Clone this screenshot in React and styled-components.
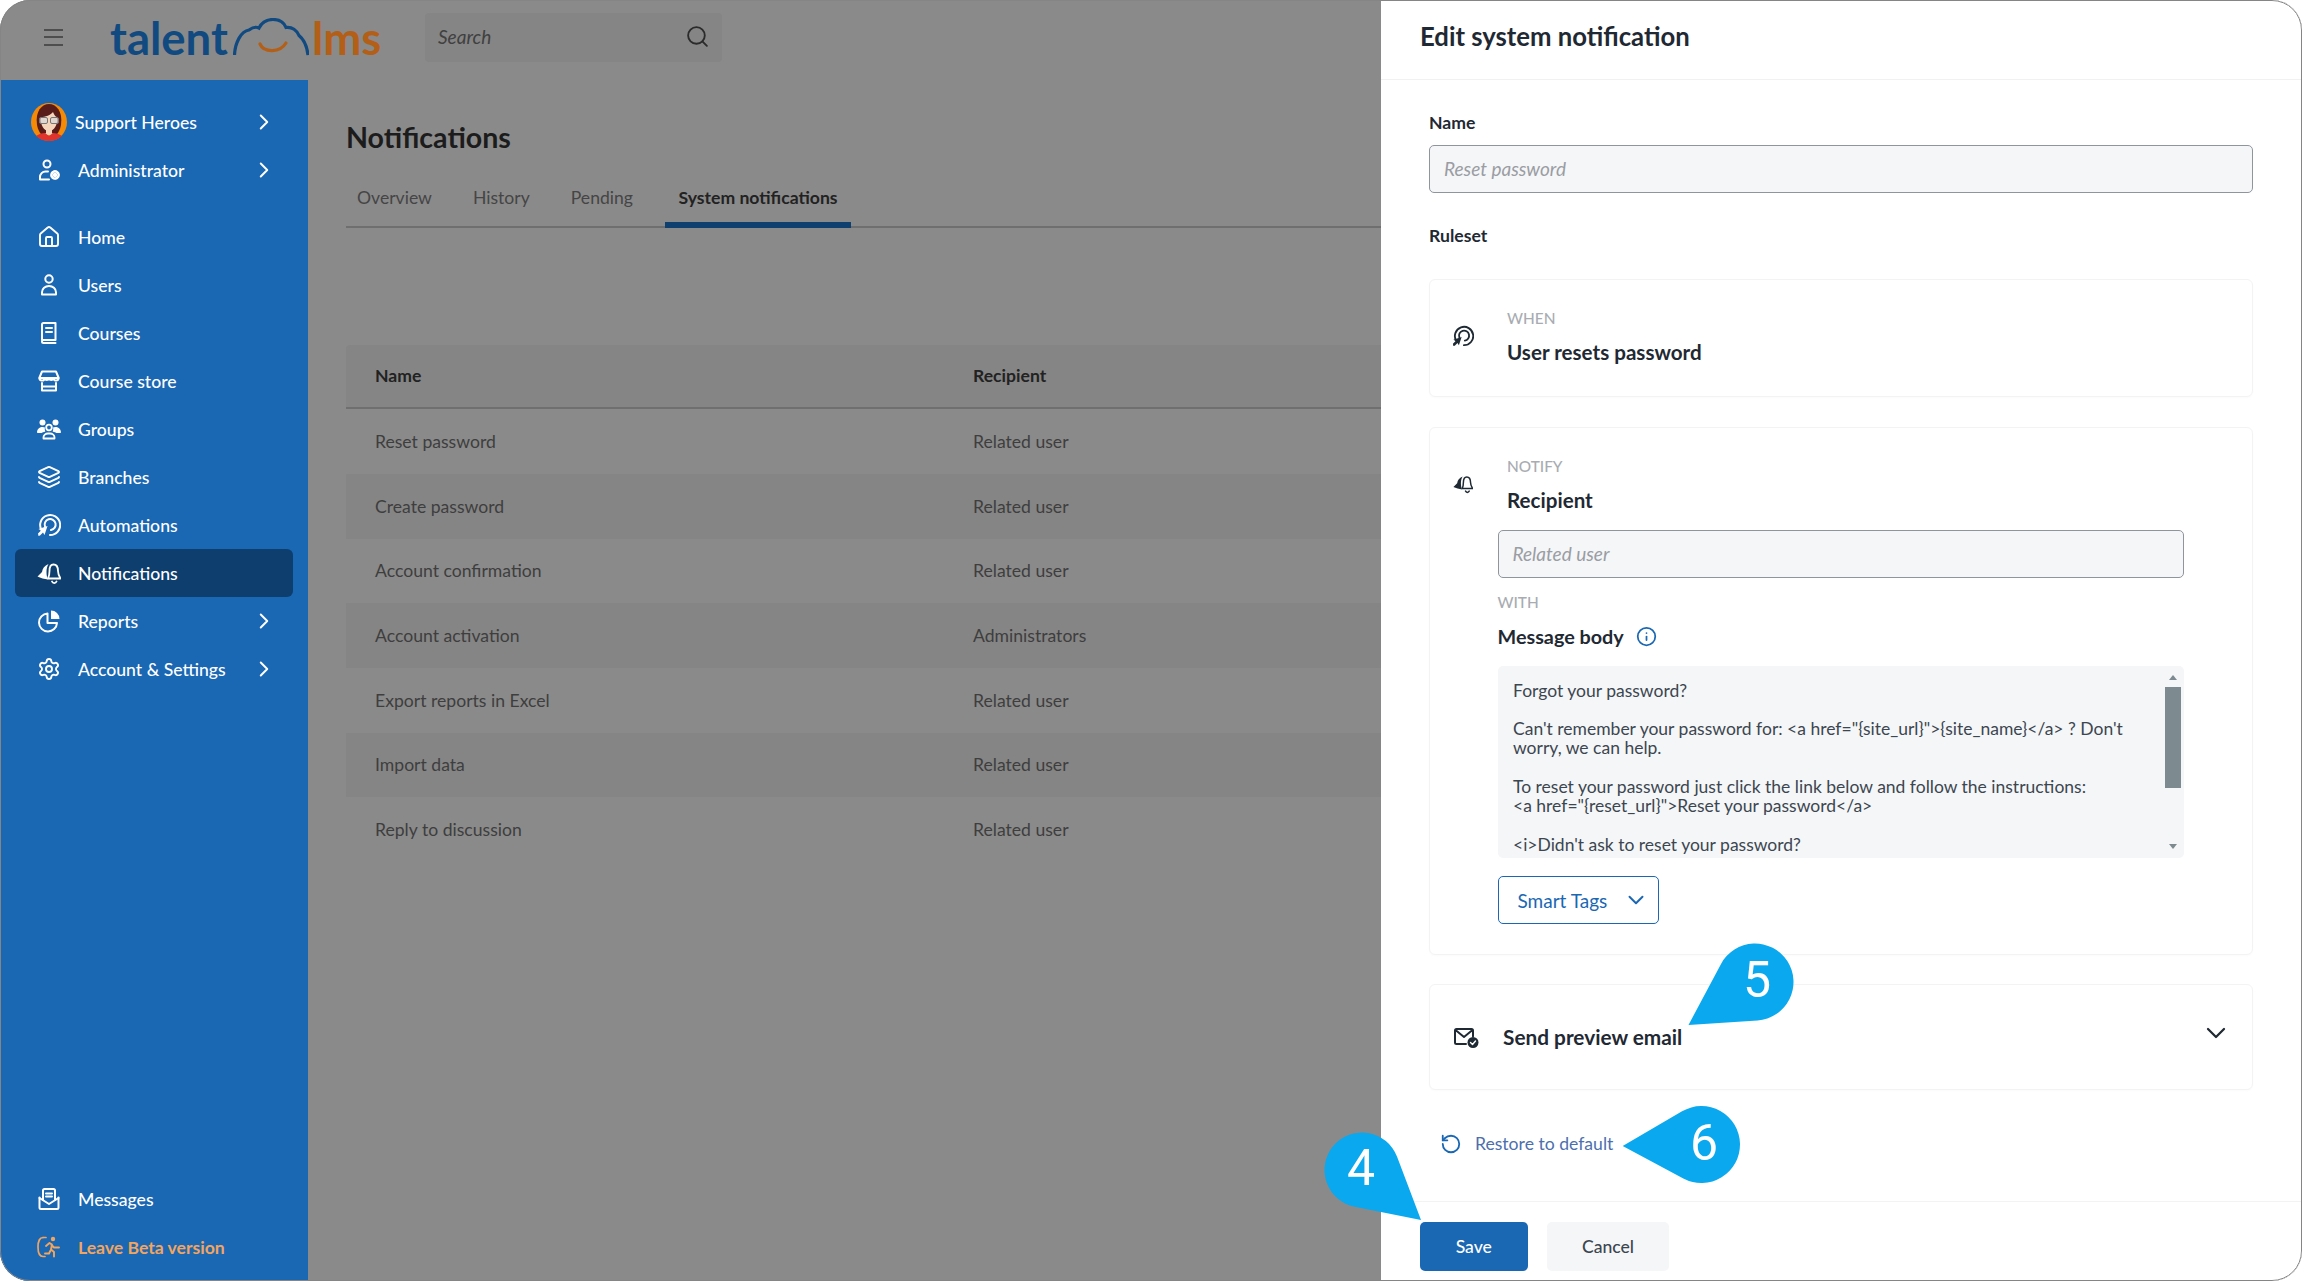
import React from 'react'
import styled, { createGlobalStyle } from 'styled-components'
import { ChevronDown, ChevronRight, Home, Info, Layers, RotateCcw, Search, Settings } from 'lucide-react'

const font = '"Lato", "Noto Sans", sans-serif'

const GlobalStyle = createGlobalStyle`
  html, body {
    margin: 0;
    padding: 0;
    background: #fff;
    font-family: ${font};
  }
  * { box-sizing: border-box; }
`

const Frame = styled.div`
  position: relative;
  width: 2302px;
  height: 1281px;
  display: flex;
  flex-direction: column;
  overflow: hidden;
  border-radius: 30px;
  background: #8a8a8a;
  &::after {
    content: '';
    position: absolute;
    inset: 0;
    border: 1.5px solid #858585;
    border-radius: 30px;
    pointer-events: none;
  }
`

const TopBar = styled.header`
  height: 80px;
  flex: none;
  display: flex;
  align-items: center;
  padding: 0 0 6px 44px;
  background: #8a8a8a;
  box-shadow: 0 1px 3px rgba(0, 0, 0, 0.25);
`

const Burger = styled.div`
  width: 19px;
  height: 17px;
  margin-right: 47px;
  border-top: 2.5px solid #4e4e4e;
  border-bottom: 2.5px solid #4e4e4e;
  display: flex;
  align-items: center;
  &::before {
    content: '';
    flex: 1;
    height: 2.5px;
    background: #4e4e4e;
  }
`

const Logo = styled.div`
  width: 269px;
  display: flex;
  align-items: center;
  margin-right: 46px;
  font-size: 45.5px;
  font-weight: 700;
  line-height: 1;
`

const LogoWord = styled.span`
  color: ${({ $accent }) => ($accent ? '#b35f17' : '#114a80')};
  margin-top: 2px;
`

const CloudMark = styled.svg`
  width: 76px;
  height: 38px;
  margin: 0 3px 0 5px;
  flex: none;
`

const SearchBox = styled.div`
  width: 297px;
  height: 49px;
  display: flex;
  align-items: center;
  justify-content: space-between;
  padding: 0 12px 2px 13px;
  border-radius: 4px;
  background: #858585;
  color: #404040;
  font-size: 19px;
  font-style: italic;
  svg { color: #2b2b2b; }
`

const Body = styled.div`
  flex: 1;
  min-height: 0;
  display: flex;
`

const Sidebar = styled.nav`
  width: 308px;
  flex: none;
  display: flex;
  flex-direction: column;
  padding: 18px 15px 10px;
  background: #1a67b3;
`

const NavGroup = styled.div`
  display: flex;
  flex-direction: column;
  margin-top: ${({ $gap }) => $gap || 0}px;
`

const BottomGroup = styled(NavGroup)`
  margin-top: auto;
`

const NavRow = styled.div`
  height: 48px;
  display: flex;
  align-items: center;
  gap: 17px;
  padding: 0 16px 0 22px;
  border-radius: 6px;
  font-size: 17.6px;
  font-weight: ${({ $warn }) => ($warn ? 700 : 500)};
  color: ${({ $warn }) => ($warn ? '#f2a55e' : '#fff')};
  background: ${({ $active }) => ($active ? '#0e3e6e' : 'transparent')};
`

const ProfileRow = styled(NavRow)`
  gap: 8px;
  padding-left: 16px;
`

const NavIcon = styled.svg`
  width: ${({ $size }) => $size || 24}px;
  height: ${({ $size }) => $size || 24}px;
  flex: none;
`

const Arrow = styled(ChevronRight)`
  margin-left: auto;
  flex: none;
`

const Main = styled.main`
  flex: 1;
  min-width: 0;
  padding: 39px 0 0 38px;
  background: #8a8a8a;
`

const PageTitle = styled.h1`
  margin: 0;
  font-size: 28.6px;
  line-height: 36px;
  font-weight: 700;
  color: #1c1c1c;
`

const TabBar = styled.div`
  display: flex;
  gap: 11px;
  height: 62px;
  margin-top: 11px;
  padding-left: 11px;
  border-bottom: 2px solid #6f6f6f;
`

const Tab = styled.div`
  height: 62px;
  display: flex;
  align-items: center;
  padding: 6px ${({ $active }) => ($active ? 13.5 : 12)}px 0;
  margin: 0 ${({ $active }) => ($active ? 0 : 6)}px 0 ${({ $active }) => ($active ? 3 : 0)}px;
  font-size: 17.6px;
  font-weight: ${({ $active }) => ($active ? 700 : 400)};
  color: ${({ $active }) => ($active ? '#222' : '#454545')};
  border-bottom: 6px solid ${({ $active }) => ($active ? '#0f3f6e' : 'transparent')};
  &:first-child { margin-left: -12px; }
`

const TableRow = styled.div`
  display: grid;
  grid-template-columns: 598px 1fr;
  align-items: center;
  height: 64.7px;
  padding-left: 29px;
  font-size: 17.6px;
  color: #3e3e3e;
  background: ${({ $striped }) => ($striped ? '#858585' : 'transparent')};
`

const TableHead = styled(TableRow)`
  margin-top: 116.5px;
  border-radius: 4px 4px 0 0;
  border-bottom: 2.5px solid #6f6f6f;
  font-weight: 700;
  color: #222;
  background: #858585;
`

const Drawer = styled.aside`
  position: absolute;
  top: 0;
  right: 0;
  bottom: 0;
  width: 921px;
  display: flex;
  flex-direction: column;
  background: #fff;
  color: #1f2933;
`

const DrawerHead = styled.div`
  height: 80px;
  flex: none;
  display: flex;
  align-items: center;
  padding: 0 0 8px 39px;
  border-bottom: 1px solid #f1f1f2;
  font-size: 25.7px;
  font-weight: 700;
`

const DrawerBody = styled.div`
  flex: 1;
  min-height: 0;
  padding: 32px 49px 0 48px;
`

const FieldLabel = styled.div`
  font-size: 17.6px;
  line-height: 22px;
  font-weight: 700;
  margin-top: ${({ $top }) => $top || 0}px;
`

const ReadOnlyInput = styled.div`
  height: 47.5px;
  display: flex;
  align-items: center;
  margin-top: ${({ $top }) => $top || 0}px;
  padding-left: 14px;
  border: 1.5px solid #8f959c;
  border-radius: 5px;
  background: #f5f6f8;
  font-size: 19px;
  font-style: italic;
  color: #9a9da3;
`

const Card = styled.section`
  margin-top: ${({ $top }) => $top}px;
  border: 1px solid #f3f3f4;
  border-radius: 6px;
  box-shadow: 0 1px 2px rgba(0, 0, 0, 0.02);
`

const WhenCard = styled(Card)`
  height: 118px;
  display: flex;
  align-items: center;
  padding: 0 0 4px 22px;
`

const NotifyCard = styled(Card)`
  height: 528px;
  padding: 28.5px 68px 0 23px;
`

const PreviewCard = styled(Card)`
  height: 106px;
  display: flex;
  align-items: center;
  gap: 24px;
  padding: 0 20px 0 23px;
`

const RuleHead = styled.div`
  display: flex;
  align-items: center;
  gap: ${({ $gap }) => $gap || 34}px;
`

const RuleText = styled.div`
  display: flex;
  flex-direction: column;
  gap: 12px;
`

const RuleTag = styled.div`
  font-size: 15.4px;
  line-height: 20px;
  font-weight: 500;
  color: #a8acb2;
`

const RuleTitle = styled.div`
  display: flex;
  align-items: center;
  gap: 12px;
  font-size: 20.6px;
  line-height: 24px;
  font-weight: 700;
  color: #1f2933;
`

const RuleFields = styled.div`
  margin-left: 44.5px;
`

const SpacedTag = styled(RuleTag)`
  margin-top: 14.5px;
`

const SpacedTitle = styled(RuleTitle)`
  margin-top: 12px;
  font-size: 19.8px;
`

const MessageBox = styled.div`
  position: relative;
  height: 192px;
  margin-top: 17.5px;
  padding: 15px 0 0 15.5px;
  overflow: hidden;
  border-radius: 5px;
  background: #f5f6f8;
  font-size: 17.5px;
  line-height: 19.3px;
  white-space: pre;
  color: #3c4650;
`

const ScrollTrack = styled.div`
  position: absolute;
  top: 0;
  right: 3px;
  bottom: 0;
  width: 16px;
`

const ScrollThumb = styled.div`
  position: absolute;
  top: 21px;
  left: 0;
  width: 16px;
  height: 101px;
  background: #7d8a90;
`

const ScrollArrow = styled.div`
  position: absolute;
  left: 4px;
  ${({ $down }) => ($down ? 'bottom: 9px;' : 'top: 9px;')}
  border-left: 4px solid transparent;
  border-right: 4px solid transparent;
  ${({ $down }) => ($down ? 'border-top' : 'border-bottom')}: 5px solid #7d8a90;
`

const TagsButton = styled.div`
  width: 161.5px;
  height: 48px;
  display: flex;
  align-items: center;
  justify-content: space-between;
  margin-top: 18.5px;
  padding: 0 9px 0 19px;
  border: 1.5px solid #1a67b3;
  border-radius: 5px;
  font-size: 19px;
  color: #1a67b3;
`

const PreviewTitle = styled(RuleTitle)`
  font-size: 20.8px;
`

const PreviewChevron = styled(ChevronDown)`
  margin: 0 0 8px auto;
  color: #1f2933;
`

const RestoreLink = styled.div`
  display: flex;
  align-items: center;
  gap: 13px;
  margin: 43px 0 0 11px;
  font-size: 17.6px;
  line-height: 22px;
  color: #4c6fae;
  svg { color: #1a67b3; }
`

const DrawerFoot = styled.div`
  height: 80px;
  flex: none;
  display: flex;
  gap: 19px;
  padding: 19.5px 0 0 38.5px;
  border-top: 1px solid #f3f3f4;
`

const FootButton = styled.div`
  width: ${({ $primary }) => ($primary ? 108.5 : 122)}px;
  height: 49px;
  display: flex;
  align-items: center;
  justify-content: center;
  border-radius: 5px;
  font-size: 17.6px;
  font-weight: 500;
  color: ${({ $primary }) => ($primary ? '#fff' : '#3c4650')};
  background: ${({ $primary }) => ($primary ? '#1a67b3' : '#f5f6f8')};
`

const CalloutWrap = styled.div`
  position: absolute;
  left: ${({ $left }) => $left}px;
  top: ${({ $top }) => $top}px;
  width: ${({ $w }) => $w}px;
  height: ${({ $h }) => $h}px;
  z-index: 5;
`

const CalloutShape = styled.svg`
  display: block;
  width: 100%;
  height: 100%;
`

const CalloutDigit = styled.span`
  position: absolute;
  left: ${({ $x }) => $x}px;
  top: ${({ $y }) => $y}px;
  transform: translate(-50%, -50%);
  font-family: "Roboto", "Liberation Sans", sans-serif;
  font-size: 50px;
  line-height: 1;
  color: #fff;
`

// teardrop: circle with a tail running to the tip, tangents computed from the tip
const Callout = ({ digit, cx, cy, r, tipX, tipY, digitX, digitY }) => {
  const left = Math.floor(Math.min(cx - r, tipX))
  const top = Math.floor(Math.min(cy - r, tipY))
  const w = Math.ceil(Math.max(cx + r, tipX)) - left
  const h = Math.ceil(Math.max(cy + r, tipY)) - top
  const dist = Math.hypot(tipX - cx, tipY - cy)
  const theta = Math.atan2(tipY - cy, tipX - cx)
  const alpha = Math.acos(r / dist)
  const p1 = [cx + r * Math.cos(theta + alpha) - left, cy + r * Math.sin(theta + alpha) - top]
  const p2 = [cx + r * Math.cos(theta - alpha) - left, cy + r * Math.sin(theta - alpha) - top]
  const d = `M${tipX - left} ${tipY - top}L${p1[0]} ${p1[1]}A${r} ${r} 0 1 1 ${p2[0]} ${p2[1]}Z`
  return (
    <CalloutWrap $left={left} $top={top} $w={w} $h={h}>
      <CalloutShape viewBox={`0 0 ${w} ${h}`}>
        <path d={d} fill="#0aa8ee" />
      </CalloutShape>
      <CalloutDigit $x={digitX - left} $y={digitY - top}>{digit}</CalloutDigit>
    </CalloutWrap>
  )
}

const AvatarArt = styled.svg`
  width: 36px;
  height: 38px;
  flex: none;
`

const Avatar = () => (
  <AvatarArt viewBox="0 0 36 38">
    <ellipse cx="18" cy="19" rx="18" ry="19" fill="#f58a07" />
    <path d="M6 22C4 8 11 1 18 1s14 7 12 21c-1 5-3 8-4 9H10c-1-1-3-4-4-9z" fill="#5a1c18" />
    <path d="M10 14c4 0 10-2 12-5 1 3 3 5 4 5 1 8-3 14-8 14s-9-6-8-14z" fill="#f6d5bd" />
    <path d="M15 27h6v3l3 2H12l3-2z" fill="#f6d5bd" />
    <path d="M5 33c3-2 6-3 9-3l4 3 4-3c3 0 6 1 9 3-3 3-8 5-13 5s-10-2-13-5z" fill="#e0332b" />
    <g fill="#d7d7d7" fillOpacity=".75" stroke="#777" strokeWidth="1">
      <rect x="8.5" y="14.5" width="8" height="6" rx="1.5" />
      <rect x="19.5" y="14.5" width="8" height="6" rx="1.5" />
    </g>
  </AvatarArt>
)

const Line = { fill: 'none', stroke: 'currentColor', strokeWidth: 2, strokeLinecap: 'round', strokeLinejoin: 'round' }

const AdminIcon = () => (
  <NavIcon viewBox="0 0 24 24" {...Line}>
    <circle cx="10" cy="6" r="3.5" />
    <path d="M11 13.5H8.5A5.5 5.5 0 0 0 3 19v2.5h9" />
    <circle cx="18" cy="17" r="1.3" fill="currentColor" />
    <circle cx="18" cy="17" r="3.6" strokeWidth="2.6" strokeDasharray="2 1.1" />
  </NavIcon>
)
const UserIcon = () => (
  <NavIcon viewBox="0 0 24 24" {...Line}>
    <circle cx="12" cy="6" r="3.7" />
    <path d="M5 21.5v-2.2a7 6.3 0 0 1 14 0v2.2z" />
  </NavIcon>
)
const BookIcon = () => (
  <NavIcon viewBox="0 0 24 24" {...Line}>
    <path d="M5 19V3.5A1.5 1.5 0 0 1 6.5 2h12v17H6.5A1.5 1.5 0 0 0 5 20.5 1.5 1.5 0 0 0 6.5 22h12" />
    <path d="M9 7h6M9 11h6" />
  </NavIcon>
)
const StoreIcon = () => (
  <NavIcon viewBox="0 0 24 24" {...Line}>
    <path d="M5 2.500h14l2.500 6a2.500 2.500 0 0 1-5 1 2.500 2.500 0 0 1-4.500 0 2.500 2.500 0 0 1-4.500 0 2.500 2.500 0 0 1-5-1z" />
    <path d="M2.500 9h19" />
    <path d="M5 14v7.500h14V14M5 17.500h14" />
  </NavIcon>
)
const GroupIcon = () => (
  <NavIcon viewBox="0 0 24 24">
    <g {...Line} strokeWidth="1.800">
      <circle cx="12" cy="10.500" r="2.800" />
      <path d="M6.500 21.500v-1.200a4.500 3.800 0 0 1 4.500-3.800h2a4.500 3.800 0 0 1 4.500 3.800v1.200z" />
    </g>
    <g fill="currentColor">
      <circle cx="5.500" cy="5.500" r="3" />
      <circle cx="18.500" cy="5.500" r="3" />
      <path d="M0 15.500c0-3 2-5.500 5.500-5.500 1 0 2 .2 2.500.6-.5 1.200-.2 2.900.4 3.900C6.500 15 5 15.500 4.500 16H.8c-.5 0-.8-.2-.8-.5zM24 15.500c0-3-2-5.500-5.500-5.500-1 0-2 .2-2.500.6.500 1.200.2 2.900-.4 3.900 1.900.5 3.400 1 3.900 1.500h3.700c.5 0 .8-.2.8-.5z" />
    </g>
  </NavIcon>
)
const AutomationIcon = ({ size }) => (
  <NavIcon viewBox="0 0 24 24" $size={size}>
    <g {...Line}>
      <path d="M4.500 17A10 10 0 1 1 13 22" />
      <path d="M8 13.500A5.500 5.500 0 1 1 14 17" />
    </g>
    <path d="M1.500 23l1.500-.5 3-3 1.500 2.500 3-9-9 3 2.500 1.500-3 3z" fill="currentColor" />
  </NavIcon>
)
const BellsIcon = ({ size }) => (
  <NavIcon viewBox="0 0 24 24" $size={size}>
    <path d="M11.500 3C7.500 4.500 5.500 7.500 5 11L.5 15.500c3 1.500 7 2.500 10.500 3-1-2-1.500-4.500-1.500-7.500 0-3 .7-6 2-8z" fill="currentColor" />
    <path d="M16.500 3.500c3 0 4.500 3 4.500 6.500 0 3 1 5 2.500 7.500H11c1-2 1.500-4 1.500-7.500 0-3.500 1-6.500 4-6.500zM15 20.500a2.400 2.400 0 0 0 4.500 0" {...Line} strokeWidth="1.800" />
  </NavIcon>
)
const ReportIcon = () => (
  <NavIcon viewBox="0 0 24 24">
    <path d="M10.500 4.500a9 9 0 1 0 9.500 9.500h-9.500z" {...Line} />
    <path d="M14 1.500a8.500 8.500 0 0 1 8.500 8.500H14z" fill="currentColor" />
  </NavIcon>
)
const MessagesIcon = () => (
  <NavIcon viewBox="0 0 24 24" {...Line}>
    <path d="M2.500 10.500v10a1.500 1.500 0 0 0 1.500 1.500h16a1.500 1.500 0 0 0 1.500-1.500v-10" />
    <path d="M2.500 11l9.500 6 9.500-6" />
    <path d="M6 13V3.500A1.500 1.500 0 0 1 7.500 2h9A1.500 1.500 0 0 1 18 3.500V13" />
    <path d="M9 6.500h6M9 9.500h6" />
  </NavIcon>
)
const LeaveIcon = () => (
  <NavIcon viewBox="0 0 24 24">
    <path d="M6 2.500C2.500 2.500 1 7 1 12s1.500 9.500 5 9.500h2" {...Line} strokeWidth="1.700" />
    <path d="M6 2.500h3" {...Line} strokeWidth="1.700" />
    <circle cx="16" cy="4" r="2.200" fill="currentColor" />
    <path d="M9 11l3.500-3 2.500 1.500-1 5 3 2.500v4.500M14.500 10l2.500 2.500h5M13.500 15.500l-1.500 3H8" {...Line} strokeWidth="1.900" />
  </NavIcon>
)
const PreviewIcon = () => (
  <NavIcon viewBox="0 0 26 24" $size={26}>
    <path d="M13 19H3.500A1.500 1.500 0 0 1 2 17.500v-12A1.500 1.500 0 0 1 3.500 4h15A1.500 1.500 0 0 1 20 5.500v6M2.500 5l8.500 7 8.500-7" {...Line} stroke="#1f2933" />
    <circle cx="20" cy="17.500" r="5.500" fill="#1f2933" />
    <path d="M17.500 17.500l2 2 3-3.500" {...Line} stroke="#fff" strokeWidth="1.400" />
  </NavIcon>
)

const topNav = [
  { label: 'Home', icon: <Home size={24} strokeWidth={1.9} /> },
  { label: 'Users', icon: <UserIcon /> },
  { label: 'Courses', icon: <BookIcon /> },
  { label: 'Course store', icon: <StoreIcon /> },
  { label: 'Groups', icon: <GroupIcon /> },
  { label: 'Branches', icon: <Layers size={24} strokeWidth={1.9} /> },
  { label: 'Automations', icon: <AutomationIcon /> },
  { label: 'Notifications', icon: <BellsIcon />, active: true },
  { label: 'Reports', icon: <ReportIcon />, more: true },
  { label: 'Account & Settings', icon: <Settings size={24} strokeWidth={1.9} />, more: true },
]

const rows = [
  ['Reset password', 'Related user'],
  ['Create password', 'Related user'],
  ['Account confirmation', 'Related user'],
  ['Account activation', 'Administrators'],
  ['Export reports in Excel', 'Related user'],
  ['Import data', 'Related user'],
  ['Reply to discussion', 'Related user'],
]

const messageText = `Forgot your password?

Can't remember your password for: <a href="{site_url}">{site_name}</a> ? Don't
worry, we can help.

To reset your password just click the link below and follow the instructions:
<a href="{reset_url}">Reset your password</a>

<i>Didn't ask to reset your password?`

const App = () => (
  <>
    <GlobalStyle />
    <Frame>
      <TopBar>
        <Burger />
        <Logo>
          <LogoWord>talent</LogoWord>
          <CloudMark viewBox="0 0 76 38">
            <path d="M1.500 37C2 25 8 13 16 12c4-3 8-3 10-2 3-6 9-8.500 14-8.500 6 0 11 3 13 8 6-1 11 3 13 8 5 4 8 11 9 19.500" fill="none" stroke="#114a80" strokeWidth="3.200" />
            <path d="M27 26c4 9 20 9 26-1" fill="none" stroke="#b35f17" strokeWidth="3.200" strokeLinecap="round" />
          </CloudMark>
          <LogoWord $accent>lms</LogoWord>
        </Logo>
        <SearchBox>
          Search
          <Search size={25} strokeWidth={1.8} />
        </SearchBox>
      </TopBar>
      <Body>
        <Sidebar>
          <NavGroup>
            <ProfileRow>
              <Avatar />
              Support Heroes
              <Arrow size={26} strokeWidth={1.8} />
            </ProfileRow>
            <NavRow>
              <AdminIcon />
              Administrator
              <Arrow size={26} strokeWidth={1.8} />
            </NavRow>
          </NavGroup>
          <NavGroup $gap={19}>
            {topNav.map(item => (
              <NavRow key={item.label} $active={item.active}>
                {item.icon}
                {item.label}
                {item.more && <Arrow size={26} strokeWidth={1.8} />}
              </NavRow>
            ))}
          </NavGroup>
          <BottomGroup>
            <NavRow>
              <MessagesIcon />
              Messages
            </NavRow>
            <NavRow $warn>
              <LeaveIcon />
              Leave Beta version
            </NavRow>
          </BottomGroup>
        </Sidebar>
        <Main>
          <PageTitle>Notifications</PageTitle>
          <TabBar>
            <Tab>Overview</Tab>
            <Tab>History</Tab>
            <Tab>Pending</Tab>
            <Tab $active>System notifications</Tab>
          </TabBar>
          <TableHead>
            <span>Name</span>
            <span>Recipient</span>
          </TableHead>
          {rows.map(([name, recipient], i) => (
            <TableRow key={name} $striped={i % 2 === 1}>
              <span>{name}</span>
              <span>{recipient}</span>
            </TableRow>
          ))}
        </Main>
      </Body>

      <Drawer>
        <DrawerHead>Edit system notification</DrawerHead>
        <DrawerBody>
          <FieldLabel>Name</FieldLabel>
          <ReadOnlyInput $top={11}>Reset password</ReadOnlyInput>
          <FieldLabel $top={32}>Ruleset</FieldLabel>

          <WhenCard $top={32}>
            <RuleHead $gap={33}>
              <AutomationIcon size={22} />
              <RuleText>
                <RuleTag>WHEN</RuleTag>
                <RuleTitle>User resets password</RuleTitle>
              </RuleText>
            </RuleHead>
          </WhenCard>

          <NotifyCard $top={30}>
            <RuleHead>
              <BellsIcon size={20} />
              <RuleText>
                <RuleTag>NOTIFY</RuleTag>
                <RuleTitle>Recipient</RuleTitle>
              </RuleText>
            </RuleHead>
            <RuleFields>
              <ReadOnlyInput $top={18}>Related user</ReadOnlyInput>
              <SpacedTag>WITH</SpacedTag>
              <SpacedTitle>
                Message body
                <Info size={21} color="#1a67b3" strokeWidth={2} />
              </SpacedTitle>
              <MessageBox>
                {messageText}
                <ScrollTrack>
                  <ScrollArrow />
                  <ScrollThumb />
                  <ScrollArrow $down />
                </ScrollTrack>
              </MessageBox>
              <TagsButton>
                Smart Tags
                <ChevronDown size={26} strokeWidth={1.8} />
              </TagsButton>
            </RuleFields>
          </NotifyCard>

          <PreviewCard $top={29}>
            <PreviewIcon />
            <PreviewTitle>Send preview email</PreviewTitle>
            <PreviewChevron size={32} strokeWidth={1.7} />
          </PreviewCard>

          <RestoreLink>
            <RotateCcw size={22} strokeWidth={2} />
            Restore to default
          </RestoreLink>
        </DrawerBody>
        <DrawerFoot>
          <FootButton $primary>Save</FootButton>
          <FootButton>Cancel</FootButton>
        </DrawerFoot>
      </Drawer>

      <Callout digit="5" cx={1755} cy={982} r={38.5} tipX={1688.5} tipY={1025} digitX={1757} digitY={980} />
      <Callout digit="6" cx={1701.5} cy={1144.5} r={38.5} tipX={1622.7} tipY={1146} digitX={1704} digitY={1143} />
      <Callout digit="4" cx={1362} cy={1170} r={37.5} tipX={1421} tipY={1220} digitX={1361} digitY={1168} />
    </Frame>
  </>
)

export default App
